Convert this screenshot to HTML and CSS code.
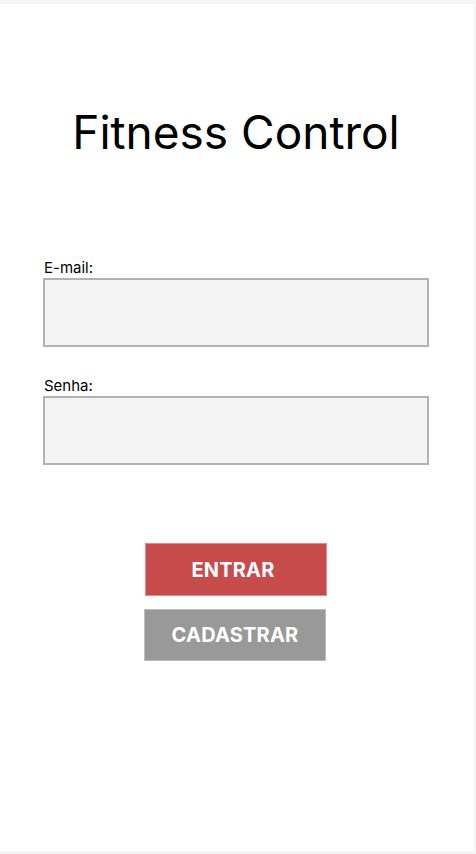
FILE: index.html
```html
<!DOCTYPE html>
<html lang="pt-BR">
<head>
<meta charset="utf-8">
<title>Fitness Control</title>
<link rel="stylesheet" href="styles.css">
</head>
<body>
<main class="card">
  <div class="content">
    <h1 class="title">Fitness Control</h1>
    <form class="form">
      <div class="field">
        <label class="label" for="email">E-mail:</label>
        <input class="input" id="email" type="email">
      </div>
      <div class="field">
        <label class="label" for="senha">Senha:</label>
        <input class="input" id="senha" type="password">
      </div>
      <div class="actions">
        <button type="button" class="btn btn-primary">ENTRAR</button>
        <button type="button" class="btn btn-secondary">CADASTRAR</button>
      </div>
    </form>
  </div>
</main>
</body>
</html>
```

FILE: styles.css
```css
html, body {
  margin: 0;
  padding: 0;
}
body {
  background: #f4f4f4;
  font-family: Inter, "Noto Sans", "Liberation Sans", sans-serif;
  color: #000;
  padding-top: 4px;
}
.card {
  width: 474px;
  height: 847px;
  background: #ffffff;
  box-sizing: border-box;
}
.content {
  width: 472px;
  display: flex;
  flex-direction: column;
  align-items: center;
}
.title {
  margin: 100px 0 0 0;
  font-size: 46px;
  line-height: 56px;
  font-weight: 400;
  text-align: center;
}
.form {
  margin-top: 99px;
  display: flex;
  flex-direction: column;
  align-items: center;
  width: 100%;
}
.field {
  width: 386px;
  display: flex;
  flex-direction: column;
}
.field + .field {
  margin-top: 30px;
}
.label {
  font-size: 15px;
  line-height: 18px;
  margin-bottom: 1px;
  padding-left: 1px;
}
.input {
  box-sizing: border-box;
  width: 386px;
  height: 69px;
  margin: 0;
  background: #f4f4f4;
  border: 2px solid #b2b2b2;
  border-radius: 0;
  outline: none;
  padding: 0 8px;
  font-family: inherit;
  font-size: 15px;
}
.actions {
  margin-top: 78px;
  display: flex;
  flex-direction: column;
  align-items: center;
  gap: 13px;
}
.btn {
  box-sizing: border-box;
  width: 182px;
  height: 53px;
  margin: 0;
  padding: 0;
  font-family: inherit;
  font-size: 20px;
  font-weight: 700;
  letter-spacing: 0.2px;
  color: #ffffff;
  border-radius: 0;
  cursor: pointer;
}
.btn-primary {
  padding-right: 6px;
  background: #c84b4c;
  border: 1px solid #dc8a8a;
}
.btn-secondary {
  height: 52px;
  margin-right: 2px;
  background: #999999;
  border: 1px solid #bdbdbd;
}
```
